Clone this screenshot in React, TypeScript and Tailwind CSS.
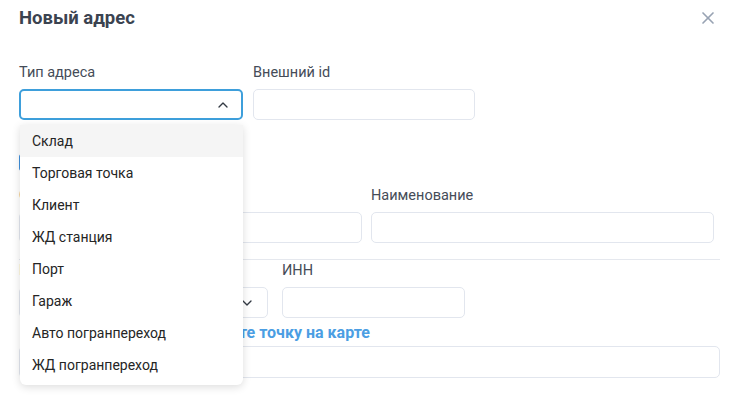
import { ChevronDown, ChevronUp, X } from "lucide-react";

const OPTIONS = [
  "Склад",
  "Торговая точка",
  "Клиент",
  "ЖД станция",
  "Порт",
  "Гараж",
  "Авто погранпереход",
  "ЖД погранпереход",
];

const inputCls = "h-[31px] rounded-[5px] border border-[#e2e6ee] bg-white";
const labelCls = "h-5 text-[14.5px] leading-5 text-[#454c58]";

export default function App() {
  return (
    <div
      className="relative h-[396px] w-[730px] overflow-hidden bg-white"
      style={{ fontFamily: "Roboto, 'Noto Sans', sans-serif" }}
    >
      <div className="flex items-center justify-between pl-[19px] pr-[12px] pt-[6px]">
        <h2 className="text-[18.5px] font-bold leading-6 text-[#3b4350]">Новый адрес</h2>
        <X className="h-[20px] w-[20px] text-[#98a3b3]" strokeWidth={2} />
      </div>

      <div className="mt-[33px] flex gap-[10px] pl-[19px]">
        <div className="flex w-[224px] flex-col gap-[6px]">
          <span className={labelCls}>Тип адреса</span>
          <div className="flex h-[31px] items-center justify-end rounded-[5px] border-2 border-[#3e9fdb] pr-[10px]">
            <ChevronUp className="h-4 w-4 text-[#333a44]" strokeWidth={2} />
          </div>
        </div>
        <div className="flex w-[222px] flex-col gap-[6px]">
          <span className={labelCls}>Внешний id</span>
          <div className={inputCls} />
        </div>
      </div>

      <div className="mt-[34px] pl-[19px]">
        <div className="h-[17px] w-[17px] rounded-[3px] bg-[#3e8fdb]" />
      </div>

      <div className="mt-[15px] flex gap-[9px] pl-[19px]">
        <div className="flex w-[343px] flex-col gap-[6px]">
          <span className={labelCls}>Страна</span>
          <div className={inputCls} />
        </div>
        <div className="flex w-[343px] flex-col gap-[6px]">
          <span className={labelCls}>Наименование</span>
          <div className={inputCls} />
        </div>
      </div>

      <div className="ml-[19px] mt-[16px] h-px w-[701px] bg-[#e5e8ee]" />

      <div className="mt-[1px] flex gap-[14px] pl-[19px]">
        <div className="flex w-[249px] flex-col gap-[6px]">
          <span className={labelCls}>Регион</span>
          <div className={`${inputCls} flex items-center justify-end pr-[12px]`}>
            <ChevronDown className="h-4 w-4 text-[#333a44]" strokeWidth={2} />
          </div>
        </div>
        <div className="flex w-[183px] flex-col gap-[6px]">
          <span className={labelCls}>ИНН</span>
          <div className={inputCls} />
        </div>
      </div>

      <div className="mt-[5px] pl-[19px]">
        <div className="flex w-[351px] justify-end text-[16px] font-bold leading-5 text-[#4b9ee3]">
          Укажите точку на карте
        </div>
        <div className="mt-[3px] h-[32px] w-[701px] rounded-[5px] border border-[#e2e6ee]" />
      </div>

      <ul className="absolute left-[20px] top-[125px] w-[223px] rounded-b-[6px] bg-white pb-[4px] shadow-[0_2px_8px_rgba(0,0,0,0.14)]">
        {OPTIONS.map((o, i) => (
          <li
            key={o}
            className={`flex h-[32px] items-center pl-[12px] text-[14px] text-[#252525] ${
              i === 0 ? "bg-[#f5f5f5]" : ""
            }`}
          >
            {o}
          </li>
        ))}
      </ul>
    </div>
  );
}
